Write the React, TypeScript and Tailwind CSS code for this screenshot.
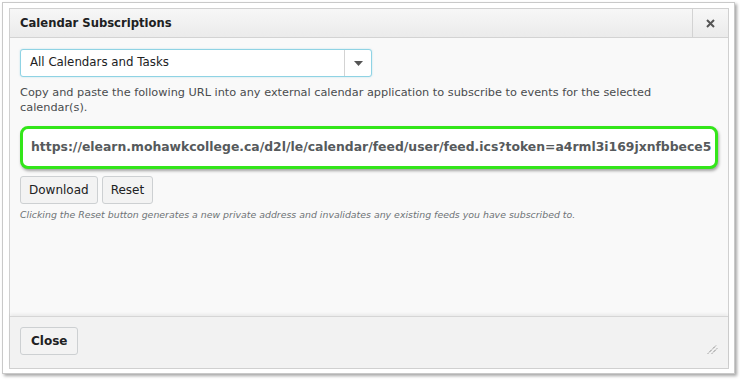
const font = { fontFamily: '"DejaVu Sans", Verdana, sans-serif' };

function Btn({ label, bold }: { label: string; bold?: boolean }) {
  return (
    <button className={`h-[28px] px-[8px] rounded-[3px] border border-[#cdd0d2] bg-[#f3f3f3] text-[12px] text-[#202122] ${bold ? "font-bold px-[10px]" : ""}`}>
      {label}
    </button>
  );
}

export default function App() {
  return (
    <div className="w-[740px] h-[380px] bg-white pl-[2px] pt-[2px] text-[#494c4e]" style={font}>
      <div className="w-[733px] h-[372px] border border-[#c9c9c9] bg-white pl-[6px] pt-[5px] shadow-[2px_2px_3px_rgba(0,0,0,0.35)]">
        <div className="w-[720px] h-[361px] border border-[#d0d0d0] flex flex-col">
          {/* Header */}
          <div className="h-[29px] flex items-stretch border-b border-[#d3d3d3] bg-gradient-to-b from-[#f7f7f7] to-[#ebebeb]">
            <div className="flex-1 flex items-center pl-[10px] pt-[1px] text-[11.6px] font-bold text-[#202122]">
              Calendar Subscriptions
            </div>
            <div className="w-[36px] border-l border-[#d3d3d3] flex items-center justify-center">
              <svg width="9" height="9" viewBox="0 0 9 9">
                <path d="M1 1 L8 8 M8 1 L1 8" stroke="#555" strokeWidth="2" />
              </svg>
            </div>
          </div>

          {/* Body */}
          <div className="flex-1 bg-[#f9f9f9] px-[10px] pt-[11px]">
            <div className="w-[352px] h-[28px] bg-white border border-[#8fd3e4] rounded-[3px] flex items-center shadow-[0_0_2px_rgba(0,150,200,0.25)]">
              <div className="flex-1 pl-[9px] text-[11.8px] text-[#202122]">All Calendars and Tasks</div>
              <div className="w-[27px] h-full border-l border-[#d3d3d3] flex items-center justify-center">
                <svg width="9" height="5" viewBox="0 0 9 5">
                  <path d="M0 0 H9 L4.5 5 Z" fill="#555" />
                </svg>
              </div>
            </div>
            <p className="mt-[8px] text-[11.3px] leading-[15px] w-[680px] text-[#494c4e]">
              Copy and paste the following URL into any external calendar application to subscribe to events for the selected calendar(s).
            </p>
            <div className="mt-[11px] h-[43px] bg-white border-[3px] border-[#33e61a] rounded-[8px] flex items-center pl-[8px] shadow-[1px_2px_3px_rgba(0,0,0,0.35)]">
              <span className="text-[12.4px] font-bold text-[#565a5c] whitespace-nowrap">
                https://elearn.mohawkcollege.ca/d2l/le/calendar/feed/user/feed.ics?token=a4rml3i169jxnfbbece5
              </span>
            </div>
            <div className="mt-[7px] flex gap-[4px]">
              <Btn label="Download" />
              <Btn label="Reset" />
            </div>
            <p className="mt-[4px] text-[9.4px] italic text-[#6e7376]">
              Clicking the Reset button generates a new private address and invalidates any existing feeds you have subscribed to.
            </p>
          </div>

          {/* Footer */}
          <div className="h-[52px] bg-[#f2f2f2] border-t border-[#d6d6d6] shadow-[0_-2px_3px_rgba(0,0,0,0.06)] flex items-start pt-[10px] px-[10px] relative">
            <Btn label="Close" bold />
            <svg width="11" height="9" viewBox="0 0 11 9" className="absolute right-[10px] bottom-[14px]">
              <path d="M1 8.5 L9 0.5 M5 8.5 L10 3.5" stroke="#555" strokeWidth="1" strokeDasharray="1 1" />
            </svg>
          </div>
        </div>
      </div>
    </div>
  );
}
